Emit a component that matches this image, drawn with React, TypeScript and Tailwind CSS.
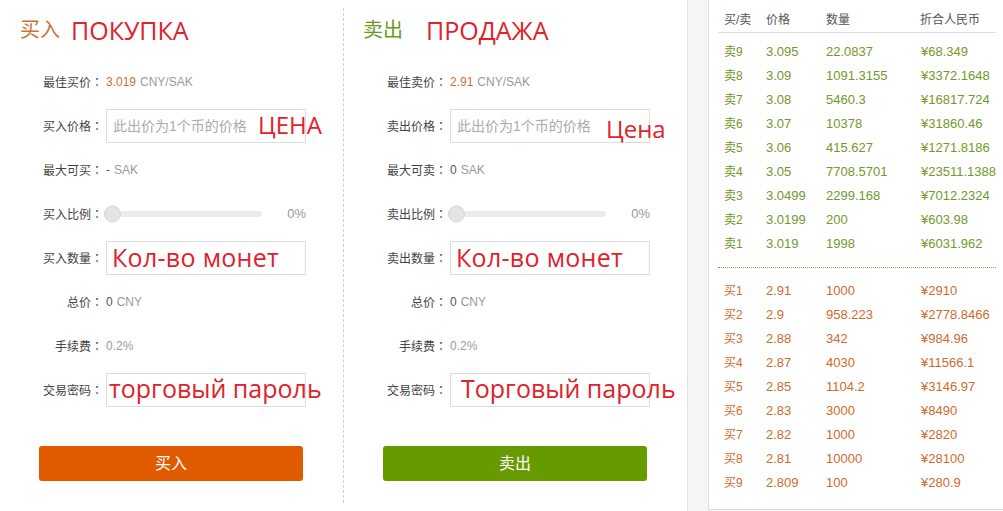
import React from "react";

const cjk = '"Liberation Sans", "Noto Sans CJK SC", sans-serif';
const ru = '"Open Sans", "Liberation Sans", sans-serif';
const colonFont = '"Noto Sans CJK JP", sans-serif';

type Side = "buy" | "sell";

const sells = [
  ["卖9", "3.095", "22.0837", "¥68.349"],
  ["卖8", "3.09", "1091.3155", "¥3372.1648"],
  ["卖7", "3.08", "5460.3", "¥16817.724"],
  ["卖6", "3.07", "10378", "¥31860.46"],
  ["卖5", "3.06", "415.627", "¥1271.8186"],
  ["卖4", "3.05", "7708.5701", "¥23511.1388"],
  ["卖3", "3.0499", "2299.168", "¥7012.2324"],
  ["卖2", "3.0199", "200", "¥603.98"],
  ["卖1", "3.019", "1998", "¥6031.962"],
];

const buys = [
  ["买1", "2.91", "1000", "¥2910"],
  ["买2", "2.9", "958.223", "¥2778.8466"],
  ["买3", "2.88", "342", "¥984.96"],
  ["买4", "2.87", "4030", "¥11566.1"],
  ["买5", "2.85", "1104.2", "¥3146.97"],
  ["买6", "2.83", "3000", "¥8490"],
  ["买7", "2.82", "1000", "¥2820"],
  ["买8", "2.81", "10000", "¥28100"],
  ["买9", "2.809", "100", "¥280.9"],
];

function Label({ text }: { text: string }) {
  return (
    <div className="w-[103px] shrink-0 text-right text-[12px] text-[#444]">
      {text}
      <span style={{ fontFamily: colonFont }}>：</span>
    </div>
  );
}

function Row({ label, children }: { label: string; children: React.ReactNode }) {
  return (
    <div className="flex h-[44px] items-center">
      <Label text={label} />
      <div className="ml-[3px] flex items-center">{children}</div>
    </div>
  );
}

function Field({ placeholder, note, noteClass }: { placeholder?: string; note: string; noteClass: string }) {
  return (
    <div className="relative h-[34px] w-[200px]">
      <div className="flex h-full w-full items-center border border-[#dcdcdc] bg-white pl-[6px] text-[14px] text-[#aaa]">
        {placeholder}
      </div>
      <span
        className={`absolute whitespace-nowrap leading-none text-[#e0222b] ${noteClass}`}
        style={{ fontFamily: ru }}
      >
        {note}
      </span>
    </div>
  );
}

function TradeForm({ side }: { side: Side }) {
  const buy = side === "buy";
  return (
    <div className="flex h-full flex-col">
      <div className={`flex h-[60px] items-center ${buy ? "pl-[20px]" : "pl-[19px]"}`}>
        <span className={`text-[20px] ${buy ? "text-[#c97139]" : "text-[#6b9a1f]"}`}>{buy ? "买入" : "卖出"}</span>
        <span
          className={`text-[25px] leading-none text-[#e0222b] ${buy ? "ml-[11px]" : "ml-[23px]"}`}
          style={{ fontFamily: ru }}
        >
          {buy ? "ПОКУПКА" : "ПРОДАЖА"}
        </span>
      </div>

      <Row label={buy ? "最佳买价" : "最佳卖价"}>
        <span className="text-[12px] text-[#c97139]">{buy ? "3.019" : "2.91"}</span>
        <span className="ml-[4px] text-[12px] text-[#999]">CNY/SAK</span>
      </Row>

      <Row label={buy ? "买入价格" : "卖出价格"}>
        <Field
          placeholder="此出价为1个币的价格"
          note={buy ? "ЦЕНА" : "Цена"}
          noteClass={buy ? "left-[152px] top-[4px] text-[24px]" : "left-[156px] top-[8px] text-[24px]"}
        />
      </Row>

      <Row label={buy ? "最大可买" : "最大可卖"}>
        <span className="text-[12px] text-[#555]">{buy ? "-" : "0"}</span>
        <span className="ml-[4px] text-[12px] text-[#999]">SAK</span>
      </Row>

      <Row label={buy ? "买入比例" : "卖出比例"}>
        <div className="relative -ml-[2px] h-[6px] w-[158px] rounded-full bg-[#ececec]">
          <div className="absolute left-0 top-1/2 h-[17px] w-[17px] -translate-y-1/2 rounded-full border border-[#d6d6d6] bg-[#e4e4e4]" />
        </div>
        <span className="w-[44px] text-right text-[13px] text-[#999]">0%</span>
      </Row>

      <Row label={buy ? "买入数量" : "卖出数量"}>
        <Field note="Кол-во монет" noteClass="left-[6px] top-[4px] text-[25px] tracking-[0.3px]" />
      </Row>

      <Row label="总价">
        <span className="text-[12px] text-[#555]">0</span>
        <span className="ml-[4px] text-[12px] text-[#999]">CNY</span>
      </Row>

      <Row label="手续费">
        <span className="text-[12px] text-[#999]">0.2%</span>
      </Row>

      <Row label="交易密码">
        <Field
          note={buy ? "торговый пароль" : "Торговый пароль"}
          noteClass={buy ? "left-[3px] top-[3px] text-[25px]" : "left-[11px] top-[3px] text-[25px]"}
        />
      </Row>

      <button
        className={`ml-[39px] mt-[34px] h-[35px] w-[264px] rounded-[3px] text-[16px] text-white ${
          buy ? "bg-[#e05a00]" : "bg-[#679a00]"
        }`}
      >
        {buy ? "买入" : "卖出"}
      </button>
    </div>
  );
}

function BookRow({ r, color }: { r: string[]; color: string }) {
  return (
    <div className={`flex h-[24px] items-center pl-[6px] text-[13px] ${color}`}>
      <span className="w-[42px] text-[12px]">{r[0]}</span>
      <span className="w-[60px]">{r[1]}</span>
      <span className="w-[95px]">{r[2]}</span>
      <span className="whitespace-nowrap">{r[3]}</span>
    </div>
  );
}

export default function App() {
  return (
    <div className="flex h-[511px] w-[1003px] overflow-hidden bg-white" style={{ fontFamily: cjk }}>
      <div className="h-full w-[343px] shrink-0">
        <TradeForm side="buy" />
      </div>
      <div className="my-[8px] w-0 shrink-0 border-l border-dashed border-[#cfcfcf]" />
      <div className="h-full w-[344px] shrink-0 border-r border-[#e3e3e3]">
        <TradeForm side="sell" />
      </div>
      <div className="flex-1 bg-[#f5f5f5] pb-[1px] pl-[20px] pr-[4px]">
        <div className="h-full border-x border-b border-[#dcdcdc] bg-white px-[9px]">
          <div className="flex h-[32px] items-end pb-[3px] pl-[6px] text-[12px] text-[#555]">
            <span className="w-[42px]">买/卖</span>
            <span className="w-[60px]">价格</span>
            <span className="w-[94px]">数量</span>
            <span>折合人民币</span>
          </div>
          <div className="border-t border-[#dedede]" />
          <div className="pt-[7px]">
            {sells.map((r) => (
              <BookRow key={r[0]} r={r} color="text-[#73992b]" />
            ))}
          </div>
          <div className="mt-[11px] border-t border-dotted border-[#c4804f]" />
          <div className="pt-[11px]">
            {buys.map((r) => (
              <BookRow key={r[0]} r={r} color="text-[#cf6a2d]" />
            ))}
          </div>
        </div>
      </div>
    </div>
  );
}
